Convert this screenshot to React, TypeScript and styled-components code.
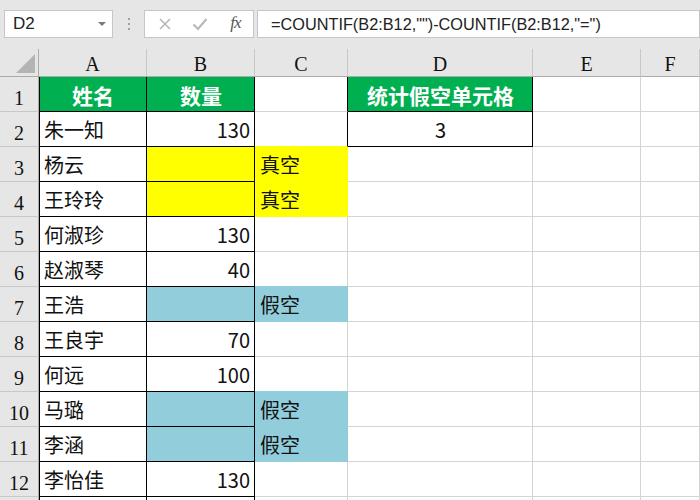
import styled, { createGlobalStyle } from "styled-components";

const GlobalStyle = createGlobalStyle`
  html, body {
    margin: 0;
    padding: 0;
    background: #ffffff;
    overflow: hidden;
  }
  body {
    font-family: "Noto Sans CJK SC", "Liberation Sans", sans-serif;
  }
`;

const GRID = "#d4d4d4";
const BLACK = "#000000";
const GREEN = "#00b050";
const YELLOW = "#ffff00";
const BLUE = "#92cddc";

const Window = styled.div`
  width: 700px;
  height: 500px;
  overflow: hidden;
  background: #ffffff;
`;

const Toolbar = styled.div`
  height: 49px;
  box-sizing: border-box;
  background: #e6e6e6;
  display: flex;
  align-items: flex-start;
  padding: 10px 0 0 4px;
`;

const Box = styled.div<{ $w?: number }>`
  height: 28px;
  box-sizing: border-box;
  background: #ffffff;
  border: 1px solid #c6c6c6;
  display: flex;
  align-items: center;
  ${(p) => (p.$w ? `width: ${p.$w}px; flex: none;` : "flex: 1;")}
`;

const NameText = styled.span`
  font-family: "Liberation Sans", sans-serif;
  font-size: 17px;
  color: #222;
  padding-left: 8px;
  flex: 1;
`;

const Caret = styled.span`
  width: 0;
  height: 0;
  border-left: 4px solid transparent;
  border-right: 4px solid transparent;
  border-top: 4px solid #7a7a7a;
  margin-right: 6px;
`;

const Dots = styled.div`
  width: 31px;
  height: 28px;
  display: flex;
  flex-direction: column;
  align-items: center;
  justify-content: center;
  gap: 3px;
  & span {
    width: 2px;
    height: 2px;
    background: #a0a0a0;
  }
`;

const IconSlot = styled.div`
  width: 36px;
  height: 26px;
  display: flex;
  align-items: center;
  justify-content: center;
`;

const Fx = styled.span`
  font-family: "Liberation Serif", serif;
  font-style: italic;
  font-size: 17px;
  color: #555;
  letter-spacing: -1px;
  padding-bottom: 2px;
`;

const FormulaText = styled.span`
  font-family: "Liberation Sans", sans-serif;
  font-size: 16.3px;
  color: #222;
  padding-left: 13px;
  white-space: nowrap;
`;

const Gap = styled.div<{ $w: number }>`
  width: ${(p) => p.$w}px;
  flex: none;
`;

const Sheet = styled.div`
  display: grid;
  grid-template-columns: 39px 108px 108px 93px 185px 108px 1fr;
  grid-template-rows: 28px repeat(13, 35px);
`;

const Corner = styled.div`
  background: #e6e6e6;
  border-right: 1px solid #ababab;
  border-bottom: 1px solid #ababab;
  box-sizing: border-box;
  display: flex;
  align-items: flex-end;
  justify-content: flex-end;
  padding: 0 3px 3px 0;
  & span {
    width: 0;
    height: 0;
    border-left: 19px solid transparent;
    border-bottom: 19px solid #b4b4b4;
  }
`;

const ColHead = styled.div`
  background: #e6e6e6;
  border-right: 1px solid #c8c8c8;
  border-bottom: 1px solid #ababab;
  box-sizing: border-box;
  display: flex;
  align-items: center;
  justify-content: center;
  font-family: "Liberation Serif", serif;
  font-size: 20px;
  color: #111;
  padding-top: 3px;
`;

const RowHead = styled.div`
  background: #e6e6e6;
  border-right: 1px solid #ababab;
  border-bottom: 1px solid #c8c8c8;
  box-sizing: border-box;
  display: flex;
  align-items: center;
  justify-content: center;
  font-family: "Liberation Serif", serif;
  font-size: 20px;
  color: #111;
  padding-top: 8px;
`;

const Cell = styled.div<{
  $fill: string;
  $right: string;
  $bottom: string;
  $left?: boolean;
  $align: "left" | "right" | "center";
  $head?: boolean;
}>`
  box-sizing: border-box;
  background: ${(p) => p.$fill};
  border-right: 1px solid ${(p) => p.$right};
  border-bottom: 1px solid ${(p) => p.$bottom};
  box-shadow: ${(p) => (p.$left ? `inset 1px 0 0 ${BLACK}` : "none")};
  display: flex;
  align-items: center;
  justify-content: ${(p) =>
    p.$align === "left" ? "flex-start" : p.$align === "right" ? "flex-end" : "center"};
  padding: 1px 4px 0 5px;
  font-family: "Noto Sans CJK SC", "Liberation Sans", sans-serif;
  font-size: ${(p) => (p.$head ? "21px" : "20px")};
  font-weight: ${(p) => (p.$head ? 700 : 400)};
  color: ${(p) => (p.$head ? "#ffffff" : "#111111")};
  white-space: nowrap;
  overflow: hidden;
`;

type Row = { a: string; b: string; c?: string; fill?: string; d?: string };

const rows: Row[] = [
  { a: "姓名", b: "数量", d: "统计假空单元格" },
  { a: "朱一知", b: "130", d: "3" },
  { a: "杨云", b: "", c: "真空", fill: YELLOW },
  { a: "王玲玲", b: "", c: "真空", fill: YELLOW },
  { a: "何淑珍", b: "130" },
  { a: "赵淑琴", b: "40" },
  { a: "王浩", b: "", c: "假空", fill: BLUE },
  { a: "王良宇", b: "70" },
  { a: "何远", b: "100" },
  { a: "马璐", b: "", c: "假空", fill: BLUE },
  { a: "李涵", b: "", c: "假空", fill: BLUE },
  { a: "李怡佳", b: "130" },
  { a: "", b: "" },
];

const columns = ["A", "B", "C", "D", "E", "F"];

function CrossIcon() {
  return (
    <svg width="14" height="14" viewBox="0 0 14 14">
      <path d="M2 2 L12 12 M12 2 L2 12" stroke="#b8b8b8" strokeWidth="1.6" fill="none" />
    </svg>
  );
}

function CheckIcon() {
  return (
    <svg width="16" height="14" viewBox="0 0 16 14">
      <path d="M1.5 7.5 L6 12 L14.5 2" stroke="#b8b8b8" strokeWidth="2.2" fill="none" />
    </svg>
  );
}

export default function App() {
  return (
    <Window>
      <GlobalStyle />
      <Toolbar>
        <Box $w={109}>
          <NameText>D2</NameText>
          <Caret />
        </Box>
        <Dots>
          <span />
          <span />
          <span />
        </Dots>
        <Box $w={110}>
          <Gap $w={2} />
          <IconSlot>
            <CrossIcon />
          </IconSlot>
          <IconSlot>
            <CheckIcon />
          </IconSlot>
          <IconSlot>
            <Fx>fx</Fx>
          </IconSlot>
        </Box>
        <Gap $w={3} />
        <Box>
          <FormulaText>=COUNTIF(B2:B12,"")-COUNTIF(B2:B12,"=")</FormulaText>
        </Box>
      </Toolbar>
      <Sheet>
        <Corner>
          <span />
        </Corner>
        {columns.map((c) => (
          <ColHead key={c}>{c}</ColHead>
        ))}
        {rows.map((r, i) => {
          const head = i === 0;
          const last = i === rows.length - 1;
          const next = rows[i + 1];
          const inD = i <= 1;
          const bFill = head ? GREEN : r.fill ?? "#ffffff";
          const cFill = r.fill ?? "#ffffff";
          const cRight = inD ? BLACK : r.fill ?? GRID;
          const cBottom = r.fill ?? next?.fill ?? GRID;
          return [
            <RowHead key={`h${i}`}>{last ? "" : i + 1}</RowHead>,
            <Cell
              key={`a${i}`}
              $fill={head ? GREEN : "#ffffff"}
              $right={BLACK}
              $bottom={BLACK}
              $left
              $align={head ? "center" : "left"}
              $head={head}
            >
              {r.a}
            </Cell>,
            <Cell
              key={`b${i}`}
              $fill={bFill}
              $right={BLACK}
              $bottom={BLACK}
              $align={head ? "center" : "right"}
              $head={head}
            >
              {r.b}
            </Cell>,
            <Cell key={`c${i}`} $fill={cFill} $right={cRight} $bottom={cBottom} $align="left">
              {r.c}
            </Cell>,
            <Cell
              key={`d${i}`}
              $fill={head ? GREEN : "#ffffff"}
              $right={inD ? BLACK : GRID}
              $bottom={inD ? BLACK : GRID}
              $align="center"
              $head={head}
            >
              {r.d}
            </Cell>,
            <Cell key={`e${i}`} $fill="#ffffff" $right={GRID} $bottom={GRID} $align="left" />,
            <Cell key={`f${i}`} $fill="#ffffff" $right={GRID} $bottom={GRID} $align="left" />,
          ];
        })}
      </Sheet>
    </Window>
  );
}
